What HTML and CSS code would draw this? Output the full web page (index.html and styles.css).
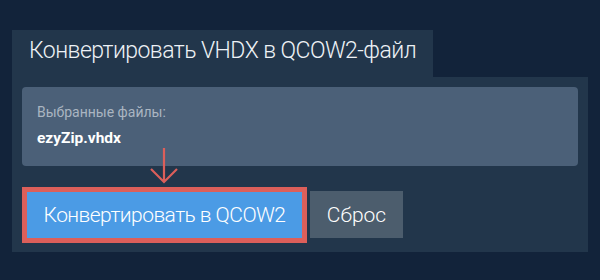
FILE: index.html
```html
<!DOCTYPE html>
<html lang="ru">
<head>
    <meta charset="UTF-8">
    <meta name="viewport" content="width=device-width, initial-scale=1.0">
    <title>Конвертировать VHDX в QCOW2</title>
    <link rel="stylesheet" href="styles.css">
</head>
<body>
    <div class="converter">
        <div class="tab">Конвертировать VHDX в QCOW2-файл</div>
        <div class="panel">
            <div class="files">
                <p class="files-label">Выбранные файлы:</p>
                <p class="files-name">ezyZip.vhdx</p>
            </div>
            <div class="actions">
                <svg class="hint-arrow" width="30" height="36" viewBox="0 0 30 36">
                    <path d="M15 0 V34 M2 21 L15 34 L28 21" fill="none" stroke="#dc5f5a" stroke-width="2.2"/>
                </svg>
                <button class="btn btn-convert">Конвертировать в QCOW2</button>
                <button class="btn btn-reset">Сброс</button>
            </div>
        </div>
    </div>
</body>
</html>
```

FILE: styles.css
```css
body {
    margin: 0;
    background-color: #12233a;
    font-family: Roboto, "Noto Sans", sans-serif;
    color: #ffffff;
}
.converter {
    padding: 30px 12px 0;
}
.tab {
    width: 421px;
    height: 47px;
    box-sizing: border-box;
    padding: 7px 0 0 17px;
    background-color: #22364b;
    font-size: 23px;
    font-weight: 300;
    letter-spacing: -0.55px;
    color: #eef2f6;
    white-space: nowrap;
}
.panel {
    width: 576px;
    height: 175px;
    box-sizing: border-box;
    padding: 10px;
    background-color: #22364b;
}
.files {
    height: 79px;
    box-sizing: border-box;
    padding: 17px 15px 0;
    background-color: #4b6078;
    border-radius: 4px;
}
.files p {
    margin: 0;
}
.files-label {
    font-size: 14px;
    color: #aab5c1;
}
.files-name {
    margin-top: 9px !important;
    font-size: 15.5px;
    font-weight: 700;
    color: #ffffff;
}
.actions {
    position: relative;
    display: flex;
    align-items: center;
    gap: 8px;
    margin: 25px 0 0 5px;
}
.hint-arrow {
    position: absolute;
    left: 122px;
    top: -43px;
}
.btn {
    border: none;
    color: #ffffff;
    font-family: inherit;
    font-weight: 300;
    cursor: pointer;
    padding: 0;
}
.btn-convert {
    width: 275px;
    height: 46px;
    background-color: #4b9be5;
    outline: 5px solid #dc5f5a;
    font-size: 21px;
    letter-spacing: -0.55px;
}
.btn-reset {
    width: 93px;
    height: 47px;
    background-color: #4c5d6d;
    font-size: 21px;
}
```
